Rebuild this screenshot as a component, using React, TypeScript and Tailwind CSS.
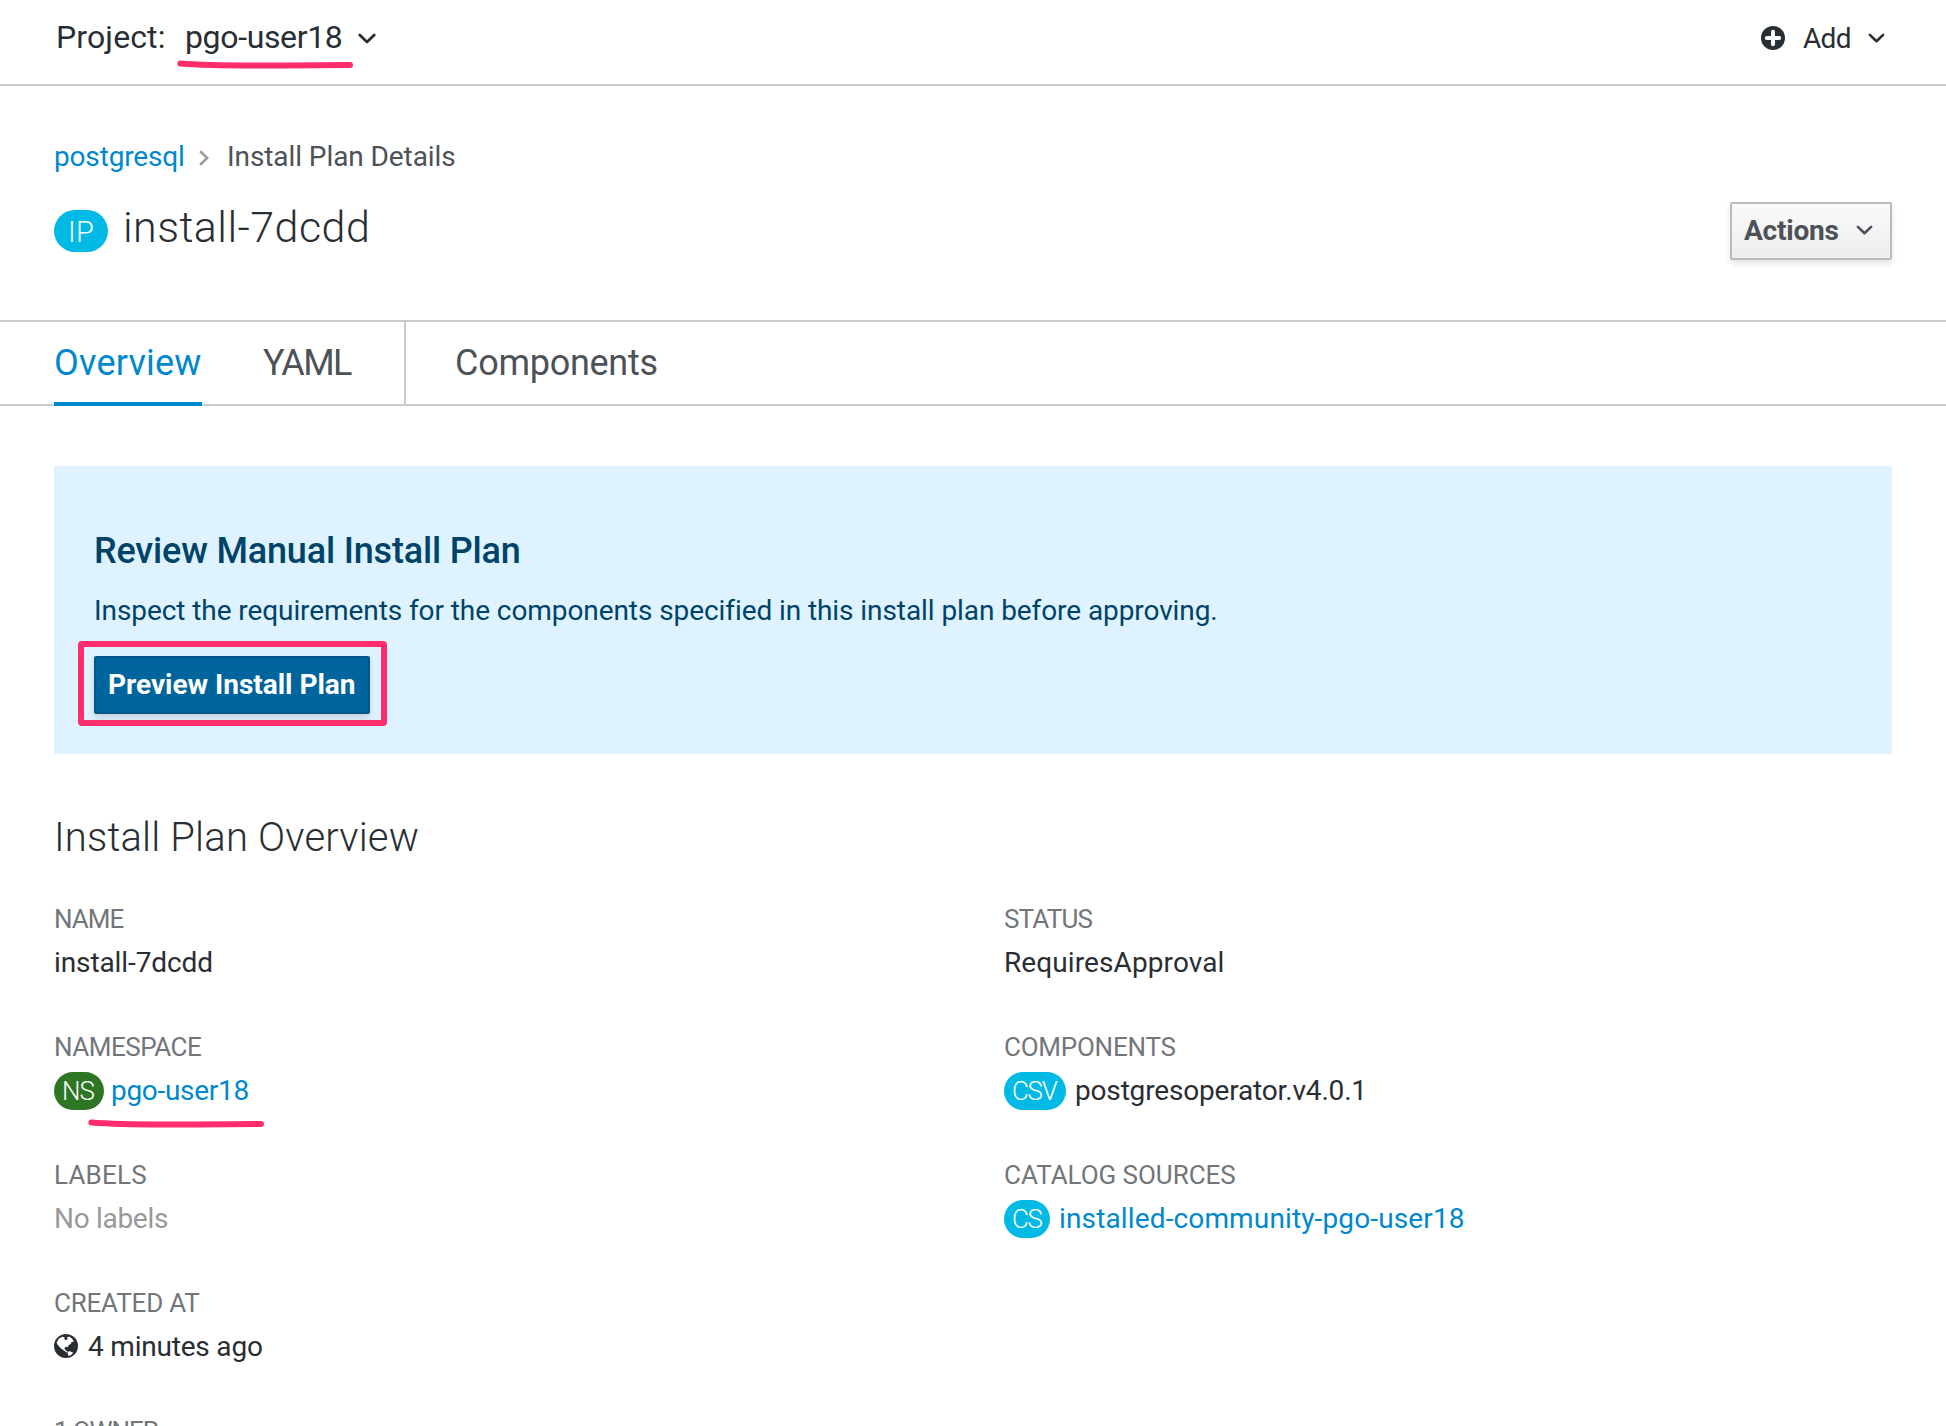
import type { ReactNode } from "react";

function Chevron({ className }: { className: string }) {
  return (
    <svg viewBox="0 0 18 12" className={className} fill="none" stroke="currentColor" strokeWidth="2.8" strokeLinecap="round" strokeLinejoin="round">
      <path d="M1.8 2 L9 9 L16.2 2" />
    </svg>
  );
}

function PlusCircle() {
  return (
    <svg viewBox="0 0 24 24" className="mt-[26px] h-[24px] w-[24px]">
      <circle cx="12" cy="12" r="12" fill="#292e34" />
      <path d="M12 5.8v12.4M5.8 12h12.4" stroke="#fff" strokeWidth="4" strokeLinecap="round" />
    </svg>
  );
}

function Globe() {
  return (
    <svg viewBox="0 0 24 24" className="mt-[9px] h-[24px] w-[24px]">
      <circle cx="12" cy="12" r="12" fill="#292e34" />
      <path
        fill="#fff"
        d="M2.6 8.4 L5 4.4 L8.4 2.8 L10.8 3.6 L10.2 5 L12 6.2 L13.6 5.2 L13 3.4 L15 2.6 L18 4.4 L20 7.4 L17.6 8 L17 9.8 L14.8 11 L13.6 13.2 L11.4 12.8 L10.4 14.4 L11.8 16.4 L13.4 17.4 L12.6 18.6 L10 16.4 L7.4 14.8 L5 12.4 L3.6 10.4 Z"
      />
      <path fill="#fff" d="M13.4 17.8 L16 17.2 L19.2 18.8 L17.6 20.8 L14.6 22 L13.8 20 Z" />
    </svg>
  );
}

function Underline({ className }: { className: string }) {
  return (
    <svg viewBox="0 0 176 10" className={className}>
      <path d="M3.4 3.6 C30 5.8 70 5.8 110 5.4 S160 5 173 5" fill="none" stroke="#ff2d6c" strokeWidth="6" strokeLinecap="round" />
    </svg>
  );
}

function Badge({ children, className }: { children: ReactNode; className: string }) {
  return <span className={`mt-[3px] block h-[38px] rounded-full pl-[8px] text-[26px] leading-[38px] font-light text-white ${className}`}>{children}</span>;
}

function Field({ label, labelClass, children }: { label: string; labelClass: string; children?: ReactNode }) {
  return (
    <div className="relative h-[128px]">
      <dt className={`text-[26px] leading-[44px] text-[#72767b] ${labelClass}`}>{label}</dt>
      <dd className="flex items-start text-[28px] leading-[43px]">{children}</dd>
    </div>
  );
}

export default function App() {
  return (
    <div className="h-[1426px] w-[1946px] overflow-hidden bg-white font-['Roboto',sans-serif] whitespace-nowrap text-[#292e34]">
      <header className="relative flex h-[86px] items-start border-b-2 border-[#cacaca] pl-[56px]">
        <div className="mt-[17px] w-[129px] text-[32px] leading-[40px] tracking-[0.13px]">Project:</div>
        <div className="mt-[17px] w-[173px] text-[32px] leading-[40px] tracking-[-0.35px]">pgo-user18</div>
        <Chevron className="mt-[33px] h-[12px] w-[18px]" />
        <Underline className="absolute top-[60px] left-[177px] h-[10px] w-[176px]" />
        <div className="mr-[61px] ml-auto flex items-start">
          <PlusCircle />
          <div className="mt-[22px] ml-[18px] w-[65px] text-[28px] leading-[33px] tracking-[-0.7px]">Add</div>
          <Chevron className="mt-[33px] h-[11px] w-[17px]" />
        </div>
      </header>

      <div className="px-[54px] pt-[54px]">
        <nav className="flex items-start text-[28px] leading-[33px]">
          <a className="w-[145px] tracking-[-0.16px] text-[#0088ce]">postgresql</a>
          <svg viewBox="0 0 10 16" className="mt-[10px] h-[16px] w-[10px]" fill="none" stroke="#9c9c9c" strokeWidth="2.6">
            <path d="M1.2 1.2 L8.2 8 L1.2 14.8" />
          </svg>
          <span className="ml-[18px] tracking-[-0.08px] text-[#4d5258]">Install Plan Details</span>
        </nav>
        <div className="mt-[29px] flex h-[118px] items-start">
          <span className="mt-[8px] block h-[42px] w-[54px] rounded-full bg-[#00b9e4] pl-[14px] text-[29px] leading-[44px] font-light tracking-[0.27px] text-white">IP</span>
          <h1 className="ml-[15px] text-[43px] leading-[50px] font-light tracking-[0.46px]">install-7dcdd</h1>
          <button className="ml-auto flex h-[58px] w-[162px] items-start rounded-[2px] border-2 border-[#bbb] bg-linear-to-b from-[#fafafa] to-[#ededed] pl-[12px] text-[#4d5258] shadow-[0_4px_6px_rgba(3,3,3,0.1)]">
            <span className="mt-[10px] w-[112px] text-left text-[28px] leading-[33px] font-bold tracking-[-0.2px]">Actions</span>
            <Chevron className="mt-[21px] h-[11px] w-[17px]" />
          </button>
        </div>
      </div>

      <div className="flex h-[86px] items-stretch border-y-2 border-[#cacaca] pl-[54px] text-[36px] leading-[42px] text-[#4d5258]">
        <div className="relative z-10 -mb-[2px] w-[148px] border-b-4 border-[#0088ce] pt-[20px] tracking-[0.2px] text-[#0088ce]">Overview</div>
        <div className="w-[204px] border-r-2 border-[#cacaca] pt-[20px] pl-[61px] tracking-[-1.6px]">YAML</div>
        <div className="pt-[20px] pl-[49px] tracking-[-0.28px]">Components</div>
      </div>

      <main className="px-[54px] pt-[60px]">
        <section className="h-[288px] bg-[#def3ff] pt-[64px] pl-[40px] text-[#004368]">
          <h2 className="text-[36px] leading-[42px] font-medium tracking-[-0.18px]">Review Manual Install Plan</h2>
          <p className="mt-[22px] text-[28px] leading-[33px] tracking-[-0.08px]">Inspect the requirements for the components specified in this install plan before approving.</p>
          <div className="relative mt-[29px] h-[58px] w-[276px]">
            <button className="flex h-[58px] w-[276px] items-start rounded-[2px] border-2 border-[#00558a] bg-[#00659c] pt-[10px] pl-[12px] text-[28px] leading-[33px] font-bold tracking-[-0.02px] text-white shadow-[0_4px_6px_rgba(3,3,3,0.12)]">
              Preview Install Plan
            </button>
            <div className="absolute -top-[15px] -left-[16px] h-[85px] w-[309px] rounded-[4px] border-6 border-[#ff2d6c]" />
          </div>
        </section>

        <h2 className="mt-[60px] mb-[36px] text-[40px] leading-[47px] font-light tracking-[0.17px]">Install Plan Overview</h2>

        <div className="grid grid-cols-[949px_1fr]">
          <dl>
            <Field label="NAME" labelClass="tracking-[-1px]">
              <span className="tracking-[-0.1px]">install-7dcdd</span>
            </Field>
            <Field label="NAMESPACE" labelClass="tracking-[-0.5px]">
              <Badge className="w-[50px] bg-[#2d7623] tracking-[-0.9px]">NS</Badge>
              <a className="ml-[7px] tracking-[-0.3px] text-[#0088ce]">pgo-user18</a>
              <Underline className="absolute top-[94px] left-[34px] h-[10px] w-[176px]" />
            </Field>
            <Field label="LABELS" labelClass="tracking-[0.2px]">
              <span className="tracking-[-0.3px] text-[#999]">No labels</span>
            </Field>
            <Field label="CREATED AT" labelClass="tracking-[-0.2px]">
              <Globe />
              <span className="ml-[10px] tracking-[-0.2px]">4 minutes ago</span>
            </Field>
            <Field label="1 OWNER" labelClass="tracking-[-1.11px]" />
          </dl>
          <dl>
            <Field label="STATUS" labelClass="pl-px tracking-[-0.85px]">
              <span className="pl-px tracking-[0.1px]">RequiresApproval</span>
            </Field>
            <Field label="COMPONENTS" labelClass="pl-px tracking-[-0.24px]">
              <Badge className="ml-px w-[62px] bg-[#00b9e4] tracking-[-1.3px]">CSV</Badge>
              <span className="ml-[9px] tracking-[-0.17px]">postgresoperator.v4.0.1</span>
            </Field>
            <Field label="CATALOG SOURCES" labelClass="pl-px tracking-[-0.04px]">
              <Badge className="ml-px w-[46px] bg-[#00b9e4] tracking-[-1.3px]">CS</Badge>
              <a className="ml-[9px] tracking-[0.14px] text-[#0088ce]">installed-community-pgo-user18</a>
            </Field>
          </dl>
        </div>
      </main>
    </div>
  );
}
